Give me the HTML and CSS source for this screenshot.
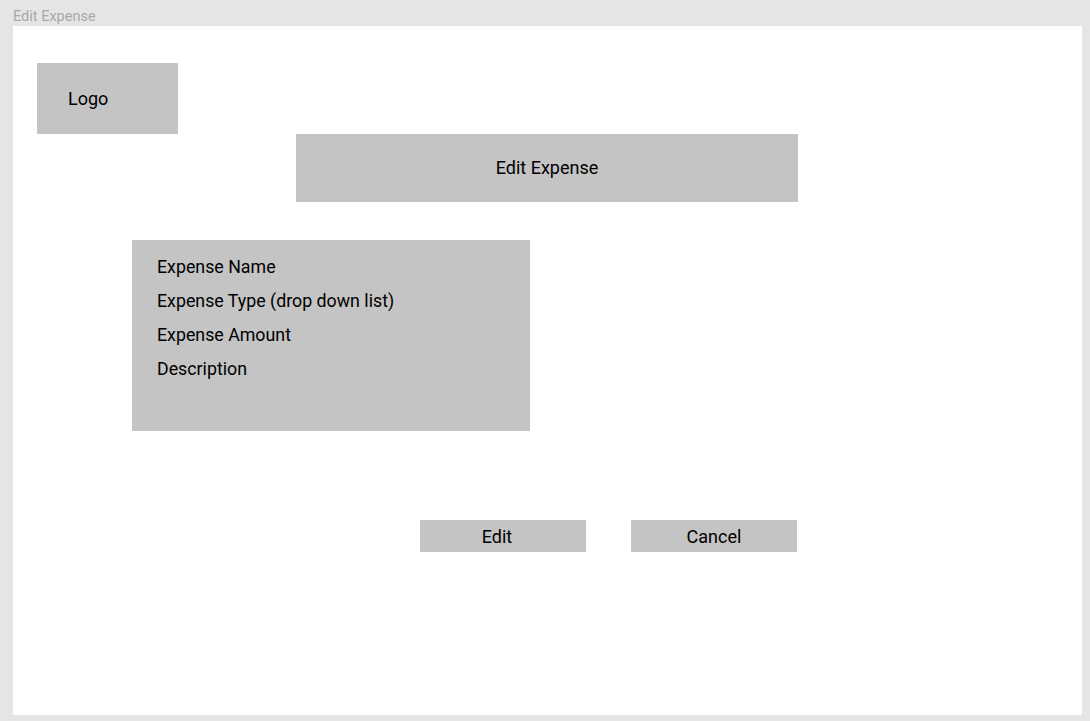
FILE: index.html
```html
<!DOCTYPE html>
<html lang="en">
<head>
<meta charset="utf-8">
<title>Edit Expense</title>
<link rel="stylesheet" href="styles.css">
</head>
<body>
<div class="frame-label">Edit Expense</div>
<main class="frame">
  <div class="logo">Logo</div>
  <h1 class="title">Edit Expense</h1>
  <section class="form">
    <div class="field">Expense Name</div>
    <div class="field">Expense Type (drop down list)</div>
    <div class="field">Expense Amount</div>
    <div class="field">Description</div>
  </section>
  <div class="actions">
    <button class="btn btn-edit">Edit</button>
    <button class="btn">Cancel</button>
  </div>
</main>
</body>
</html>
```
FILE: styles.css
```css
html, body {
  margin: 0;
  padding: 0;
}
body {
  background: #e5e5e5;
  font-family: Roboto, "Liberation Sans", sans-serif;
  width: 1090px;
  height: 721px;
  overflow: hidden;
}
.frame-label {
  height: 26px;
  padding-left: 13px;
  font-size: 14.5px;
  line-height: 33px;
  color: #a8a8a8;
  overflow: visible;
}
.frame {
  margin-left: 13px;
  width: 1069px;
  height: 689px;
  background: #ffffff;
  display: flow-root;
  color: #000;
}
.logo {
  margin: 37px 0 0 24px;
  width: 141px;
  height: 71px;
  background: #c4c4c4;
  box-sizing: border-box;
  padding-left: 31px;
  font-size: 18px;
  line-height: 71px;
}
.title {
  margin: 0 0 0 283px;
  width: 502px;
  height: 68px;
  background: #c4c4c4;
  font-size: 18px;
  font-weight: 400;
  line-height: 68px;
  text-align: center;
}
.form {
  margin: 38px 0 0 119px;
  width: 398px;
  height: 191px;
  background: #c4c4c4;
  box-sizing: border-box;
  padding: 10px 0 0 25px;
}
.field {
  font-size: 17.8px;
  line-height: 34px;
}
.actions {
  display: flex;
  gap: 45px;
  margin: 89px 0 0 407px;
}
.btn {
  width: 166px;
  height: 32px;
  border: 0;
  border-radius: 0;
  padding: 0;
  background: #c4c4c4;
  font-family: Roboto, "Liberation Sans", sans-serif;
  font-size: 18px;
  color: #000;
}
.btn-edit {
  padding-right: 12px;
}
```
